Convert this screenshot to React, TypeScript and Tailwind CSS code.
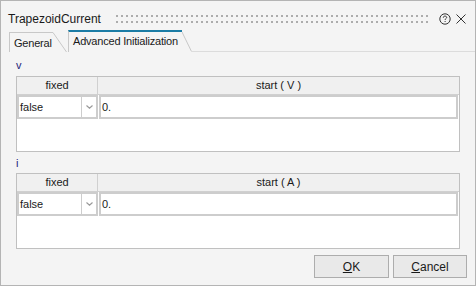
import React from "react";

function Chevron() {
  return (
    <svg width="7" height="4" viewBox="0 0 7 4">
      <path d="M0.5 0.5 L3.5 3.2 L6.5 0.5" fill="none" stroke="#9a9a9a" strokeWidth="1.2" />
    </svg>
  );
}

function VarTable({ unit }: { unit: string }) {
  return (
    <div className="h-[76px] border border-[#c0c0c0] bg-white flex flex-col">
      <div className="h-[18px] flex border-b border-[#d0d0d0] bg-[#f0f0f0] text-[11px] leading-[17px]">
        <div className="w-[81px] text-center border-r border-[#d0d0d0]">fixed</div>
        <div className="flex-1 text-center">start ( {unit} )</div>
      </div>
      <div className="h-[24px] flex">
        <div className="w-[81px] flex border-2 border-[#cdcdcd]">
          <div className="flex-1 pl-[1px] text-[11px] leading-[20px]">false</div>
          <div className="w-[15px] border-l border-[#cdcdcd] flex items-center justify-center">
            <Chevron />
          </div>
        </div>
        <div className="flex-1 ml-[1px] mr-[1px] border-2 border-[#cdcdcd] pl-[1px] text-[11px] leading-[20px]">
          0.
        </div>
      </div>
    </div>
  );
}

export default function App() {
  return (
    <div className="w-[476px] h-[286px] border border-[#b4b4b4] bg-[#f4f4f4] flex flex-col font-['Liberation_Sans',Arial,sans-serif] text-[#1a1a1a]">
      {/* title */}
      <div className="h-[29px] flex items-center pt-[6px] pl-[7px] pr-[9px]">
        <span className="text-[12px] leading-[14px]">TrapezoidCurrent</span>
        <div className="flex-1 ml-[15px] mr-[9px] h-[8px]">
          <svg width="100%" height="8">
            <defs>
              <pattern id="grip" width="5" height="6" patternUnits="userSpaceOnUse">
                <rect x="0" y="0" width="2" height="2" fill="#acacac" />
              </pattern>
            </defs>
            <rect x="0" y="0" width="100%" height="8" fill="url(#grip)" />
          </svg>
        </div>
        <svg width="12" height="12" viewBox="0 0 12 12" className="mr-[5px]">
          <circle cx="6" cy="6" r="5.2" fill="none" stroke="#333" strokeWidth="1" />
          <path d="M4.3 4.7 C4.3 3.6 5 3.1 6 3.1 C7 3.1 7.7 3.7 7.7 4.5 C7.7 5.5 6.1 5.6 6.1 6.9" fill="none" stroke="#333" strokeWidth="1" />
          <rect x="5.6" y="8" width="1" height="1" fill="#333" />
        </svg>
        <svg width="10" height="10" viewBox="0 0 10 10">
          <path d="M0.5 0.5 L9.5 9.5 M9.5 0.5 L0.5 9.5" stroke="#333" strokeWidth="1" />
        </svg>
      </div>

      {/* tabs */}
      <div className="h-[22px] flex items-end pl-[8px]">
        <div className="flex h-[20px]">
          <div className="w-[44px] border-l border-t border-[#c8c8c8] pl-[4px] text-[11px] leading-[20px] tracking-[-0.2px]">
            General
          </div>
          <svg width="14" height="20">
            <line x1="0" y1="0.5" x2="13.5" y2="20" stroke="#c8c8c8" strokeWidth="1" />
          </svg>
        </div>
        <div className="flex h-[22px] ml-[1px]">
          <div className="w-[114px] border-l border-l-[#c8c8c8] border-t-2 border-t-[#1b7ca5] pl-[4px] text-[11px] leading-[19px] tracking-[-0.2px] whitespace-nowrap">
            Advanced Initialization
          </div>
          <svg width="10" height="22">
            <line x1="0" y1="2" x2="9.5" y2="21.5" stroke="#c8c8c8" strokeWidth="1" />
          </svg>
        </div>
        <div className="flex-1 h-[1px] bg-[#dcdcdc]" />
      </div>

      {/* content */}
      <div className="px-[15px] flex flex-col">
        <div className="h-[24px] pt-[7px] text-[11px] leading-[13px] text-[#1e1e7a]">v</div>
        <VarTable unit="V" />
        <div className="h-[21px] pt-[5px] text-[11px] leading-[13px] text-[#1e1e7a]">i</div>
        <VarTable unit="A" />
      </div>

      {/* footer */}
      <div className="mt-[6px] h-[23px] flex justify-end gap-[4px] pr-[8px]">
        <button className="w-[75px] h-[23px] border border-[#adadad] bg-[#e9e9e9] text-[12px] leading-[20px] text-center">
          <span className="underline">O</span>K
        </button>
        <button className="w-[74px] h-[23px] border border-[#adadad] bg-[#e9e9e9] text-[12px] leading-[20px] text-center">
          <span className="underline">C</span>ancel
        </button>
      </div>
    </div>
  );
}
